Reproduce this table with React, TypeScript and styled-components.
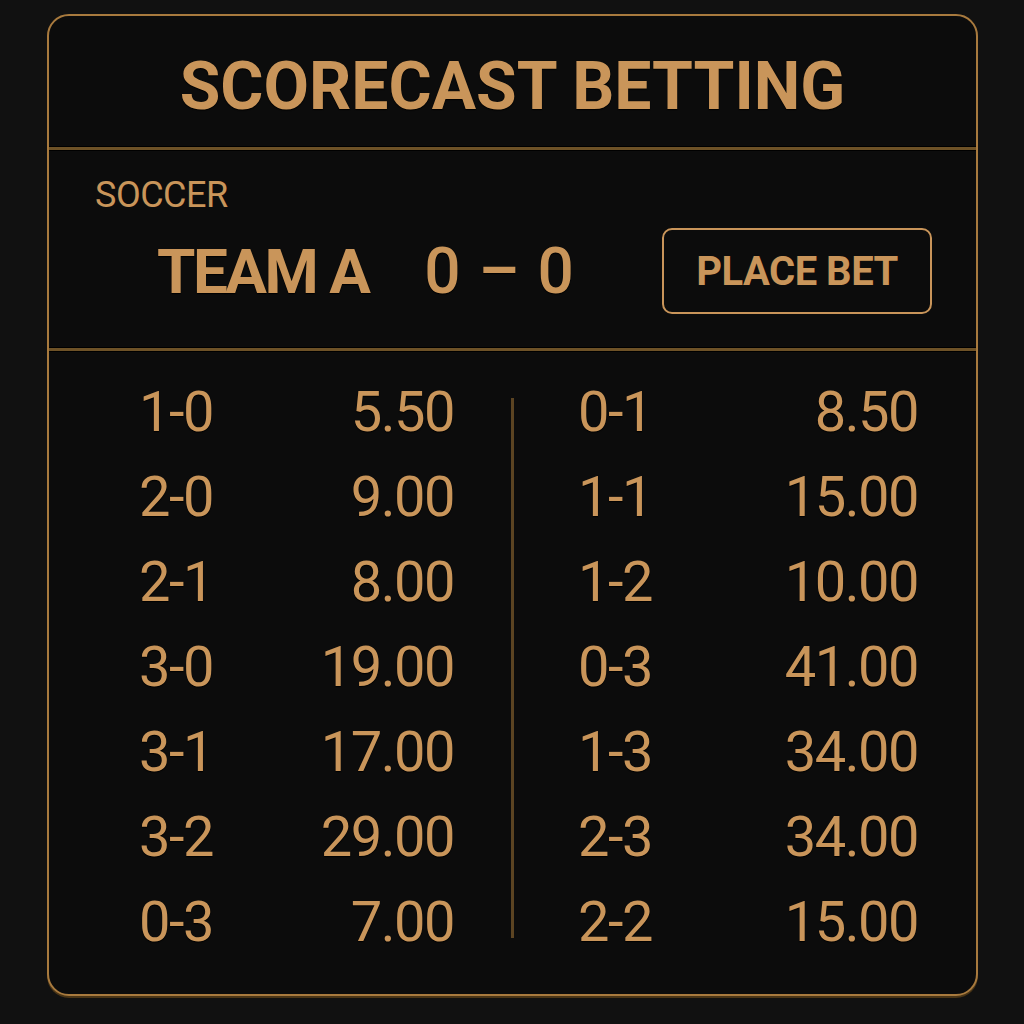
import styled, { createGlobalStyle } from "styled-components";

const GlobalStyle = createGlobalStyle`
    html, body {
        margin: 0;
        padding: 0;
        background: #111111;
    }
    body {
        font-family: Roboto, "Liberation Sans", sans-serif;
    }
`;

const gold = "#c9955a";
const line = "#6e5227";

const Page = styled.div`
    width: 1024px;
    height: 1024px;
    padding: 14px 46px 0 47px;
    box-sizing: border-box;
`;

const Card = styled.div`
    width: 931px;
    height: 982px;
    box-sizing: border-box;
    border: 2px solid #a87a3e;
    border-radius: 22px;
    background: #0c0c0c;
    display: flex;
    flex-direction: column;
    overflow: hidden;
    box-shadow: 0 2px 0 #4a3516;
`;

const Header = styled.div`
    height: 130px;
    display: flex;
    align-items: center;
    justify-content: center;
`;

const Title = styled.h1`
    margin: 0;
    color: ${gold};
    font-size: 66px;
    font-weight: 700;
    letter-spacing: 0;
    text-shadow: 0 1px 1px #000;
    transform: translateY(5px);
`;

const HLine = styled.div`
    height: 3px;
    background: ${line};
    border-top: 1px solid #000;
    border-bottom: 1px solid #000;
`;

const Match = styled.div`
    padding: 26px 44px 33px 0;
    display: flex;
    flex-direction: column;
`;

const Sport = styled.div`
    color: ${gold};
    font-size: 36px;
    line-height: 1;
    padding-left: 46px;
    letter-spacing: -0.5px;
`;

const TeamRow = styled.div`
    margin-top: 15px;
    display: flex;
    align-items: center;
    padding-left: 108px;
`;

const Team = styled.div`
    color: ${gold};
    font-size: 62px;
    font-weight: 700;
    letter-spacing: -2.5px;
    text-shadow: 0 1px 1px #000;
`;

const Score = styled.div`
    color: ${gold};
    font-size: 64px;
    font-weight: 500;
    margin-left: 56px;
    word-spacing: 2px;
    text-shadow: 0 1px 1px #000;
`;

const BetButton = styled.button`
    margin-left: auto;
    width: 270px;
    height: 86px;
    border: 2px solid ${gold};
    border-radius: 10px;
    background: transparent;
    color: ${gold};
    font-family: Roboto, "Liberation Sans", sans-serif;
    font-size: 40px;
    font-weight: 700;
    letter-spacing: -0.5px;
    cursor: pointer;
`;

const OddsArea = styled.div`
    flex: 1;
    display: grid;
    grid-template-columns: 1fr 3px 1fr;
    padding-top: 17px;
`;

const Column = styled.div<{ $left: number; $right: number }>`
    padding-left: ${(p) => p.$left}px;
    padding-right: ${(p) => p.$right}px;
`;

const VLine = styled.div`
    background: #5c4422;
    margin: 29px 0 56px;
`;

const OddsRow = styled.div`
    height: 85px;
    display: flex;
    align-items: center;
    justify-content: space-between;
    color: ${gold};
    font-size: 56px;
    letter-spacing: -1.5px;
    text-shadow: 0 1px 1px #000;
`;

const left = [
    ["1-0", "5.50"],
    ["2-0", "9.00"],
    ["2-1", "8.00"],
    ["3-0", "19.00"],
    ["3-1", "17.00"],
    ["3-2", "29.00"],
    ["0-3", "7.00"],
];

const right = [
    ["0-1", "8.50"],
    ["1-1", "15.00"],
    ["1-2", "10.00"],
    ["0-3", "41.00"],
    ["1-3", "34.00"],
    ["2-3", "34.00"],
    ["2-2", "15.00"],
];

export default function App() {
    return (
        <>
            <GlobalStyle />
            <Page>
                <Card>
                    <Header>
                        <Title>SCORECAST BETTING</Title>
                    </Header>
                    <HLine />
                    <Match>
                        <Sport>SOCCER</Sport>
                        <TeamRow>
                            <Team>TEAM A</Team>
                            <Score>0 – 0</Score>
                            <BetButton>PLACE BET</BetButton>
                        </TeamRow>
                    </Match>
                    <HLine />
                    <OddsArea>
                        <Column $left={90} $right={57}>
                            {left.map(([s, o]) => (
                                <OddsRow key={s + o}>
                                    <span>{s}</span>
                                    <span>{o}</span>
                                </OddsRow>
                            ))}
                        </Column>
                        <VLine />
                        <Column $left={64} $right={58}>
                            {right.map(([s, o]) => (
                                <OddsRow key={s + o}>
                                    <span>{s}</span>
                                    <span>{o}</span>
                                </OddsRow>
                            ))}
                        </Column>
                    </OddsArea>
                </Card>
            </Page>
        </>
    );
}
